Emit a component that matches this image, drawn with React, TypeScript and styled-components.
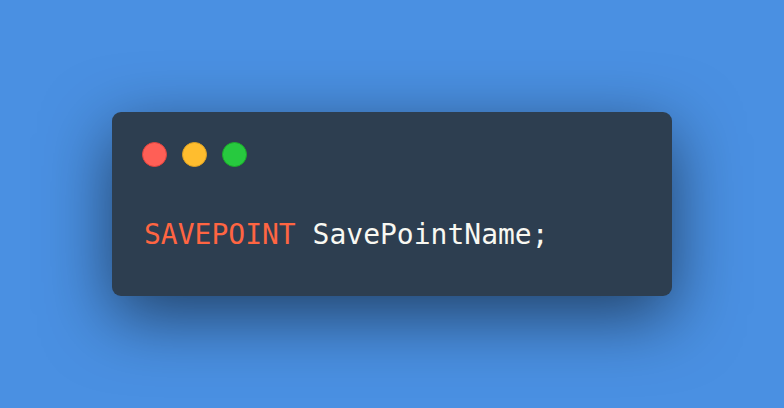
import React from "react";
import styled, { createGlobalStyle } from "styled-components";

const GlobalStyle = createGlobalStyle`
  html, body { margin: 0; padding: 0; }
  body { background: #4a90e2; }
  #root { width: 784px; height: 408px; }
`;

const Page = styled.div`
  width: 784px;
  height: 408px;
  display: flex;
  align-items: center;
  justify-content: center;
  background: #4a90e2;
`;

const Window = styled.div`
  width: 560px;
  height: 184px;
  box-sizing: border-box;
  background: #2d3e50;
  border-radius: 9px;
  box-shadow: 0 20px 68px rgba(0, 0, 0, 0.55);
  padding: 30px 30px 0 30px;
  display: flex;
  flex-direction: column;
`;

const Controls = styled.div`
  display: flex;
  gap: 15px;
  height: 25px;
`;

const Dot = styled.span<{ $color: string; $border: string }>`
  width: 25px;
  height: 25px;
  box-sizing: border-box;
  border-radius: 50%;
  background: ${(p) => p.$color};
  border: 1px solid ${(p) => p.$border};
`;

const Code = styled.pre`
  margin: 47px 0 0 2px;
  font-family: "DejaVu Sans Mono", monospace;
  font-size: 28px;
  line-height: 42px;
  color: #f8f8f2;
  white-space: pre;
`;

const Keyword = styled.span`
  color: #ff6542;
`;

export default function App() {
  return (
    <>
      <GlobalStyle />
      <Page>
        <Window>
          <Controls>
            <Dot $color="#ff5f56" $border="#e0443e" />
            <Dot $color="#ffbd2e" $border="#dea123" />
            <Dot $color="#27c93f" $border="#1aab29" />
          </Controls>
          <Code>
            <Keyword>SAVEPOINT</Keyword> SavePointName;
          </Code>
        </Window>
      </Page>
    </>
  );
}
